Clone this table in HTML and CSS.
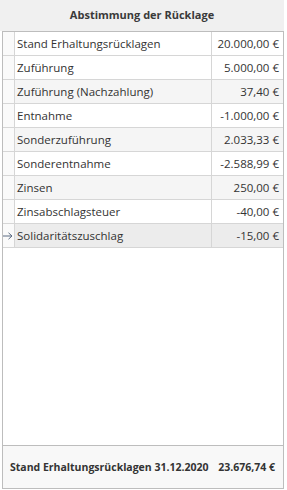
FILE: index.html
```html
<!DOCTYPE html>
<html lang="de">
<head>
    <meta charset="UTF-8">
    <meta name="viewport" content="width=device-width, initial-scale=1.0">
    <title>Abstimmung der Rücklage</title>
    <link rel="stylesheet" href="styles.css">
</head>
<body>
    <div class="title">Abstimmung der Rücklage</div>
    <div class="panel">
        <div class="grid-area">
            <table class="grid">
                <colgroup>
                    <col class="col-ind">
                    <col class="col-label">
                    <col class="col-value">
                </colgroup>
                <tbody>
                    <tr>
                        <td class="ind"></td>
                        <td class="label">Stand Erhaltungsrücklagen</td>
                        <td class="value">20.000,00 €</td>
                    </tr>
                    <tr>
                        <td class="ind"></td>
                        <td class="label">Zuführung</td>
                        <td class="value">5.000,00 €</td>
                    </tr>
                    <tr class="alt">
                        <td class="ind"></td>
                        <td class="label">Zuführung (Nachzahlung)</td>
                        <td class="value">37,40 €</td>
                    </tr>
                    <tr>
                        <td class="ind"></td>
                        <td class="label">Entnahme</td>
                        <td class="value">-1.000,00 €</td>
                    </tr>
                    <tr class="alt">
                        <td class="ind"></td>
                        <td class="label">Sonderzuführung</td>
                        <td class="value">2.033,33 €</td>
                    </tr>
                    <tr>
                        <td class="ind"></td>
                        <td class="label">Sonderentnahme</td>
                        <td class="value">-2.588,99 €</td>
                    </tr>
                    <tr class="alt">
                        <td class="ind"></td>
                        <td class="label">Zinsen</td>
                        <td class="value">250,00 €</td>
                    </tr>
                    <tr>
                        <td class="ind"></td>
                        <td class="label">Zinsabschlagsteuer</td>
                        <td class="value">-40,00 €</td>
                    </tr>
                    <tr class="selected">
                        <td class="ind">
                            <!-- current row marker -->
                            <svg class="arrow" width="12" height="8" viewBox="0 0 12 8">
                                <path d="M0.5 4H11M7.5 0.8L11 4L7.5 7.2" fill="none" stroke="#5b6b82" stroke-width="1"/>
                            </svg>
                        </td>
                        <td class="label">Solidaritätszuschlag</td>
                        <td class="value">-15,00 €</td>
                    </tr>
                </tbody>
            </table>
        </div>
        <div class="footer">
            <span>Stand Erhaltungsrücklagen 31.12.2020</span>
            <span>23.676,74 €</span>
        </div>
    </div>
</body>
</html>
```

FILE: styles.css
```css
body {
    margin: 0;
    background: #fff;
    font-family: 'Open Sans', 'Noto Sans', sans-serif;
    font-size: 11.5px;
    color: #333;
}
.title {
    width: 284px;
    height: 31px;
    line-height: 30px;
    background: #f0f0f0;
    text-align: center;
    font-weight: bold;
    font-size: 11px;
    color: #3a3a3a;
}
.panel {
    box-sizing: border-box;
    width: 282px;
    height: 458px;
    margin-left: 2px;
    border: 1px solid #bdbdbd;
    display: flex;
    flex-direction: column;
}
.grid-area {
    flex: 1;
    background: #fff;
}
.grid {
    width: 280px;
    table-layout: fixed;
    border-collapse: separate;
    border-spacing: 0;
}
.col-ind { width: 12px; }
.col-label { width: 197px; }
.col-value { width: 71px; }
.grid td {
    height: 24px;
    padding: 0;
    border-right: 1px solid #d6d6d6;
    border-bottom: 1px solid #d6d6d6;
    white-space: nowrap;
    overflow: hidden;
    box-sizing: border-box;
}
.grid td.value {
    border-right: none;
    text-align: right;
    padding-right: 4px;
}
.grid td.label {
    padding-left: 2px;
}
.grid td.ind {
    background: #fafafa;
    text-align: left;
    line-height: 0;
}
.arrow {
    display: block;
    margin-left: -2px;
}
.grid tr.alt td.label,
.grid tr.alt td.value {
    background: #f5f5f5;
}
.grid tr.selected td.label,
.grid tr.selected td.value {
    background: #ececec;
}
.footer {
    height: 42px;
    border-top: 1px solid #bdbdbd;
    background: #f8f8f8;
    display: flex;
    justify-content: space-between;
    align-items: center;
    padding: 0 8px 0 7px;
    font-weight: bold;
    font-size: 10.5px;
    white-space: nowrap;
    color: #333;
}
```
